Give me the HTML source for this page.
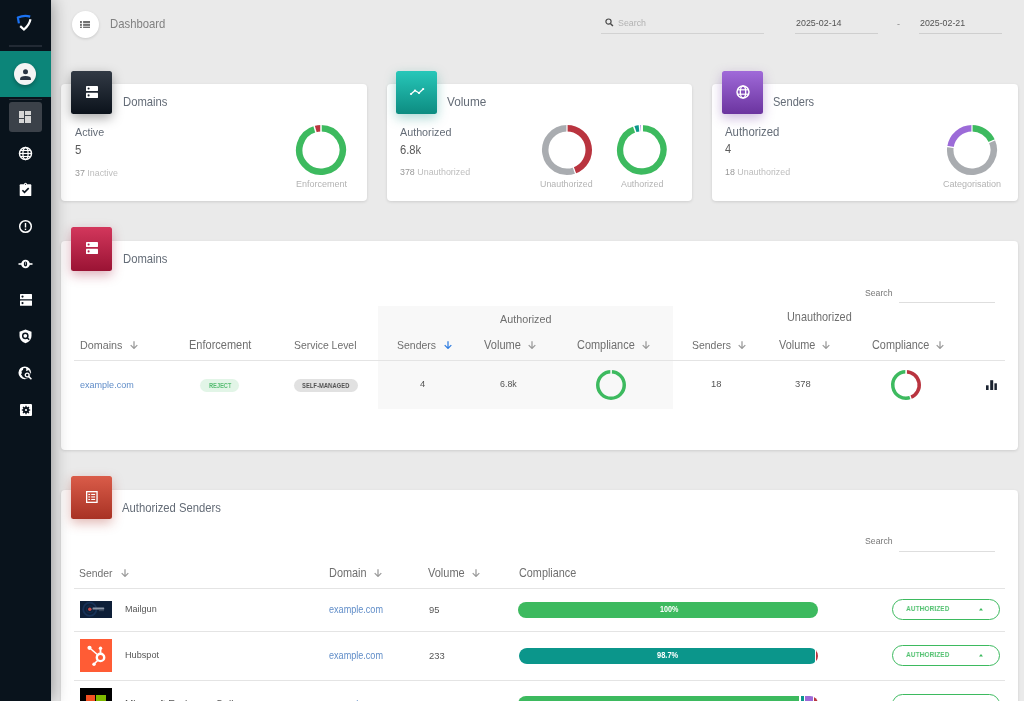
<!DOCTYPE html>
<html><head><meta charset="utf-8"><style>
html,body{margin:0;padding:0;}
body{width:1024px;height:701px;overflow:hidden;position:relative;background:#eaeaea;font-family:"Liberation Sans",sans-serif;}
.t{position:absolute;white-space:nowrap;line-height:1.117;will-change:transform;}
</style></head><body>
<div style="position:absolute;left:0px;top:0px;width:51px;height:701px;background:#09131c;box-shadow:0 0 18px rgba(0,0,0,0.42);z-index:2"></div>
<div style="position:absolute;left:0;top:0;width:51px;height:701px;z-index:3">
<svg style="position:absolute;left:0px;top:0px" width="51" height="45" viewBox="0 0 51 45"><path d="M18.9 23.4 L17.9 17.6 Q24 14.8 30.2 16.6" fill="none" stroke="#1b72f2" stroke-width="2.2" stroke-linecap="butt"/><path d="M20.2 26.2 L24 29.5 Q29.3 25 30.5 19.2" fill="none" stroke="#ffffff" stroke-width="2.2"/></svg>
<div style="position:absolute;left:9px;top:45px;width:33px;height:1.6000000000000014px;background:#222a34"></div>
<div style="position:absolute;left:0px;top:51px;width:51px;height:46px;background:#0c8579"></div>
<div style="position:absolute;left:14px;top:63px;width:22px;height:22px;background:#f4f4f4;border-radius:50%;box-shadow:0 2px 4px rgba(0,0,0,0.3)"></div>
<svg style="position:absolute;left:14px;top:63px" width="22" height="22" viewBox="0 0 22 22"><circle cx="11.5" cy="8.7" r="2.5" fill="#2a3342"/><path d="M6.1 16.9 L6.1 15.8 Q6.1 13 11.5 13 Q16.9 13 16.9 15.8 L16.9 16.9 Z" fill="#2a3342"/></svg>
<div style="position:absolute;left:9px;top:99px;width:33px;height:1px;background:#2a323b"></div>
<div style="position:absolute;left:9px;top:102px;width:33px;height:30px;background:#3b4149;border-radius:3px"></div>
<svg style="position:absolute;left:19px;top:111px" width="12" height="12" viewBox="0 0 12 12"><rect x="0" y="0" width="5" height="7" fill="#d6d6d6"/><rect x="0" y="8" width="5" height="4" fill="#d6d6d6"/><rect x="6" y="0" width="6" height="4" fill="#d6d6d6"/><rect x="6" y="5" width="6" height="7" fill="#d6d6d6"/></svg>
<svg style="position:absolute;left:18px;top:146.3px" width="15" height="15" viewBox="0 0 15 15"><circle cx="7.5" cy="7.5" r="6" fill="none" stroke="#ffffff" stroke-width="1.5"/><ellipse cx="7.5" cy="7.5" rx="2.6" ry="6" fill="none" stroke="#ffffff" stroke-width="1.3"/><line x1="1.5" y1="7.5" x2="13.5" y2="7.5" stroke="#ffffff" stroke-width="1.2"/><line x1="2.5" y1="4.5" x2="12.5" y2="4.5" stroke="#ffffff" stroke-width="1.1"/><line x1="2.5" y1="10.5" x2="12.5" y2="10.5" stroke="#ffffff" stroke-width="1.1"/></svg>
<svg style="position:absolute;left:19px;top:182px" width="13" height="15" viewBox="0 0 13 15"><rect x="0.7" y="2.3" width="11.6" height="11.8" rx="0.9" fill="#ffffff"/><circle cx="6.5" cy="2.2" r="1.5" fill="#ffffff"/><circle cx="6.5" cy="2.3" r="0.55" fill="#0b141e"/><path d="M3.4 8.2 L5.5 10.3 L9.7 6.1" fill="none" stroke="#0b141e" stroke-width="1.6"/></svg>
<svg style="position:absolute;left:18px;top:219.4px" width="15" height="15" viewBox="0 0 15 15"><circle cx="7.5" cy="7.5" r="5.8" fill="none" stroke="#ffffff" stroke-width="1.5"/><rect x="6.8" y="4" width="1.4" height="4.5" fill="#ffffff"/><rect x="6.8" y="9.6" width="1.4" height="1.4" fill="#ffffff"/></svg>
<svg style="position:absolute;left:17px;top:257px" width="17" height="14" viewBox="0 0 17 14"><line x1="1.5" y1="7" x2="15.5" y2="7" stroke="#ffffff" stroke-width="1.6"/><circle cx="8.5" cy="7" r="4.3" fill="#ffffff"/><rect x="6.9" y="4.4" width="3.2" height="5" rx="1.6" fill="#0b141e"/><rect x="8.2" y="5.2" width="0.6" height="2.6" fill="#ffffff"/></svg>
<svg style="position:absolute;left:19.7px;top:294px" width="12" height="12" viewBox="0 0 12 12"><rect x="0" y="0" width="12" height="5.2" rx="0.5" fill="#ffffff"/><rect x="0" y="6.5" width="12" height="5.2" rx="0.5" fill="#ffffff"/><circle cx="2.5" cy="2.6" r="1.1" fill="#0b141e"/><circle cx="2.5" cy="9.1" r="1.1" fill="#0b141e"/></svg>
<svg style="position:absolute;left:19px;top:329px" width="13" height="15.5" viewBox="0 0 13 15.5"><path d="M6.5 0.5 L12.5 2.8 V7 Q12.5 11.8 6.5 14.3 Q0.5 11.8 0.5 7 V2.8 Z" fill="#ffffff"/><circle cx="6.3" cy="6.8" r="2.6" fill="none" stroke="#0b141e" stroke-width="1.5"/><line x1="8.2" y1="8.7" x2="10.2" y2="10.7" stroke="#0b141e" stroke-width="1.5"/></svg>
<svg style="position:absolute;left:18px;top:366px" width="15" height="15" viewBox="0 0 15 15"><circle cx="6.8" cy="6.8" r="5.6" fill="none" stroke="#ffffff" stroke-width="1.5"/><path d="M1.5 5.5 Q2 2 5.5 1.3 Q5.5 4 3.5 5 Q4.5 7 3 8.5 Q5 10 4.8 12 Q1.5 10.5 1.5 5.5 Z" fill="#ffffff"/><path d="M7.5 1.3 Q9 3 8 5 L11.5 4 Q10.5 1.8 7.5 1.3 Z" fill="#ffffff"/><circle cx="9.4" cy="9.2" r="3.6" fill="#0b141e"/><circle cx="9.2" cy="9" r="1.9" fill="none" stroke="#ffffff" stroke-width="1.4"/><line x1="10.6" y1="10.4" x2="13.4" y2="13.2" stroke="#ffffff" stroke-width="1.5"/></svg>
<svg style="position:absolute;left:19.7px;top:403.8px" width="12" height="12" viewBox="0 0 12 12"><rect x="0" y="0" width="12" height="12" rx="1.1" fill="#ffffff"/><path d="M5.30 2.88 L5.39 1.74 L6.61 1.74 L6.70 2.88 L7.71 3.30 L8.58 2.56 L9.44 3.42 L8.70 4.29 L9.12 5.30 L10.26 5.39 L10.26 6.61 L9.12 6.70 L8.70 7.71 L9.44 8.58 L8.58 9.44 L7.71 8.70 L6.70 9.12 L6.61 10.26 L5.39 10.26 L5.30 9.12 L4.29 8.70 L3.42 9.44 L2.56 8.58 L3.30 7.71 L2.88 6.70 L1.74 6.61 L1.74 5.39 L2.88 5.30 L3.30 4.29 L2.56 3.42 L3.42 2.56 L4.29 3.30 Z" fill="#0b141e"/><circle cx="6" cy="6" r="1.1" fill="#ffffff"/></svg>
</div>
<div style="position:absolute;left:71.5px;top:10.8px;width:27.0px;height:26.999999999999996px;background:#fff;border-radius:50%;box-shadow:0 1px 3px rgba(0,0,0,0.14)"></div>
<svg style="position:absolute;left:80px;top:20.6px" width="10" height="7.8" viewBox="0 0 10 7.8"><rect x="0" y="0" width="1.9" height="2.1" fill="#707070"/><rect x="3.1" y="0" width="6.9" height="2.1" fill="#707070"/><rect x="0" y="2.8" width="1.9" height="2.1" fill="#707070"/><rect x="3.1" y="2.8" width="6.9" height="2.1" fill="#707070"/><rect x="0" y="5.6" width="1.9" height="2.1" fill="#707070"/><rect x="3.1" y="5.6" width="6.9" height="2.1" fill="#707070"/></svg>
<div class="t" style="left:109.80px;top:18.25px;font-size:11.33px;color:#818181;font-weight:400;transform:scale(1.0000,1.1);transform-origin:0 10.25px;">Dashboard</div>
<svg style="position:absolute;left:604px;top:17px" width="10" height="10" viewBox="0 0 10 10"><circle cx="4.5" cy="4.6" r="2.6" fill="none" stroke="#4a4a4a" stroke-width="1.2"/><line x1="6.4" y1="6.5" x2="8.9" y2="9" stroke="#4a4a4a" stroke-width="1.5"/></svg>
<div class="t" style="left:617.50px;top:18.80px;font-size:8.84px;color:#b2b2b2;font-weight:400;transform:scale(1.0000,1.1);transform-origin:0 8.00px;">Search</div>
<div style="position:absolute;left:601px;top:33px;width:163px;height:1px;background:#d2d2d2"></div>
<div class="t" style="left:795.60px;top:18.93px;font-size:8.92px;color:#535353;font-weight:400;transform:scale(1.0000,1.1);transform-origin:0 8.07px;">2025-02-14</div>
<div style="position:absolute;left:795px;top:33px;width:83px;height:1px;background:#cfcfcf"></div>
<div class="t" style="left:897.00px;top:18.86px;font-size:9.00px;color:#888;font-weight:400;transform:scale(1.0000,1.1);transform-origin:0 8.14px;">-</div>
<div class="t" style="left:919.80px;top:19.00px;font-size:8.84px;color:#535353;font-weight:400;transform:scale(1.0000,1.1);transform-origin:0 8.00px;">2025-02-21</div>
<div style="position:absolute;left:919px;top:33px;width:83px;height:1px;background:#cfcfcf"></div>
<div style="position:absolute;left:61px;top:84px;width:306px;height:117px;background:#fff;border-radius:4px;box-shadow:0 1px 3px rgba(0,0,0,0.12)"></div>
<div style="position:absolute;left:387px;top:84px;width:305px;height:117px;background:#fff;border-radius:4px;box-shadow:0 1px 3px rgba(0,0,0,0.12)"></div>
<div style="position:absolute;left:712px;top:84px;width:306px;height:117px;background:#fff;border-radius:4px;box-shadow:0 1px 3px rgba(0,0,0,0.12)"></div>
<div style="position:absolute;left:71px;top:71px;width:41px;height:43px;background:linear-gradient(180deg,#323a45,#0b121b);border-radius:2.5px;box-shadow:0 4px 12px rgba(0,0,0,0.35)"></div>
<svg style="position:absolute;left:85.8px;top:85.8px" width="12" height="12" viewBox="0 0 12 12"><rect x="0" y="0" width="12" height="5" rx="0.4" fill="#fff"/><rect x="0" y="6.8" width="12" height="5.2" rx="0.4" fill="#fff"/><circle cx="2.6" cy="2.5" r="1.05" fill="#1a222c"/><circle cx="2.6" cy="9.4" r="1.05" fill="#1a222c"/></svg>
<div class="t" style="left:122.80px;top:96.19px;font-size:11.28px;color:#646c77;font-weight:400;transform:scale(1.0000,1.1);transform-origin:0 10.21px;">Domains</div>
<div class="t" style="left:74.80px;top:126.50px;font-size:10.72px;color:#646c77;font-weight:400;transform:scale(1.0000,1.1);transform-origin:0 9.70px;">Active</div>
<div class="t" style="left:74.80px;top:143.79px;font-size:11.50px;color:#5b5b5b;font-weight:400;transform:scale(1.0000,1.1);transform-origin:0 10.41px;">5</div>
<div class="t" style="left:74.80px;top:168.65px;font-size:8.90px;color:#989898;font-weight:400;transform:scale(1.0000,1.1);transform-origin:0 8.05px;">37 <span style="color:#bdbdbd">Inactive</span></div>
<svg style="position:absolute;left:294.3px;top:122.69999999999999px" width="54" height="54"><path d="M27.000 5.250 A21.75 21.75 0 1 1 21.005 6.093" fill="none" stroke="#3dba5f" stroke-width="6.5"/><path d="M21.005 6.093 A21.75 21.75 0 0 1 27.000 5.250" fill="none" stroke="#b9343f" stroke-width="6.5"/><line x1="27.000" y1="9.500" x2="27.000" y2="1.000" stroke="#fff" stroke-width="1.5"/><line x1="22.176" y1="10.178" x2="19.833" y2="2.007" stroke="#fff" stroke-width="1.5"/></svg>
<div class="t" style="left:295.80px;top:178.86px;font-size:9.00px;color:#b3b3b3;font-weight:400;transform:scale(1.0000,1.1);transform-origin:0 8.14px;">Enforcement</div>
<div style="position:absolute;left:396px;top:71px;width:41px;height:43px;background:linear-gradient(180deg,#27c7b9,#0d8c81);border-radius:2.5px;box-shadow:0 4px 12px rgba(13,140,129,0.35)"></div>
<svg style="position:absolute;left:408px;top:86px" width="17" height="12" viewBox="0 0 17 12"><path d="M3 8 L7 4.5 L11 7 L15.2 3" fill="none" stroke="#fff" stroke-width="1.3"/><circle cx="3" cy="8" r="1.1" fill="#fff"/><circle cx="7" cy="4.5" r="1.1" fill="#fff"/><circle cx="11" cy="7" r="1.1" fill="#fff"/><circle cx="15.2" cy="3" r="1.1" fill="#fff"/></svg>
<div class="t" style="left:447.00px;top:95.34px;font-size:11.78px;color:#646c77;font-weight:400;transform:scale(1.0000,1.1);transform-origin:0 10.66px;">Volume</div>
<div class="t" style="left:399.80px;top:126.47px;font-size:10.75px;color:#646c77;font-weight:400;transform:scale(1.0000,1.1);transform-origin:0 9.73px;">Authorized</div>
<div class="t" style="left:399.80px;top:144.05px;font-size:11.22px;color:#5b5b5b;font-weight:400;transform:scale(1.0000,1.1);transform-origin:0 10.15px;">6.8k</div>
<div class="t" style="left:399.80px;top:168.35px;font-size:8.90px;color:#989898;font-weight:400;transform:scale(1.0000,1.1);transform-origin:0 8.05px;">378 <span style="color:#bdbdbd">Unauthorized</span></div>
<svg style="position:absolute;left:540px;top:122.69999999999999px" width="54" height="54"><path d="M27.000 5.250 A21.75 21.75 0 0 1 34.439 47.438" fill="none" stroke="#b9343f" stroke-width="6.5"/><path d="M34.439 47.438 A21.75 21.75 0 1 1 27.000 5.250" fill="none" stroke="#a9acb0" stroke-width="6.5"/><line x1="27.000" y1="9.500" x2="27.000" y2="1.000" stroke="#fff" stroke-width="1.2"/><line x1="32.985" y1="43.445" x2="35.893" y2="51.432" stroke="#fff" stroke-width="1.2"/></svg>
<div class="t" style="left:540.30px;top:179.68px;font-size:8.86px;color:#b3b3b3;font-weight:400;transform:scale(1.0000,1.1);transform-origin:0 8.02px;">Unauthorized</div>
<svg style="position:absolute;left:615.1px;top:122.89999999999999px" width="53.6" height="53.6"><path d="M26.800 5.150 A21.650000000000002 21.650000000000002 0 1 1 19.751 6.330" fill="none" stroke="#3dba5f" stroke-width="6.3"/><path d="M19.751 6.330 A21.650000000000002 21.650000000000002 0 0 1 24.725 5.250" fill="none" stroke="#0b968b" stroke-width="6.3"/><path d="M24.725 5.250 A21.650000000000002 21.650000000000002 0 0 1 26.800 5.150" fill="none" stroke="#9c6bd8" stroke-width="6.3"/><line x1="21.103" y1="10.253" x2="18.400" y2="2.406" stroke="#fff" stroke-width="1.5"/><line x1="25.123" y1="9.381" x2="24.327" y2="1.119" stroke="#fff" stroke-width="1.5"/><line x1="26.892" y1="9.300" x2="26.935" y2="1.000" stroke="#fff" stroke-width="2.2"/></svg>
<div class="t" style="left:620.50px;top:179.67px;font-size:8.87px;color:#b3b3b3;font-weight:400;transform:scale(1.0000,1.1);transform-origin:0 8.03px;">Authorized</div>
<div style="position:absolute;left:722px;top:71px;width:41px;height:43px;background:linear-gradient(180deg,#a06ad9,#6b349f);border-radius:2.5px;box-shadow:0 4px 12px rgba(107,52,159,0.35)"></div>
<svg style="position:absolute;left:735.5px;top:84.5px" width="14" height="14" viewBox="0 0 14 14"><circle cx="7" cy="7" r="6" fill="none" stroke="#fff" stroke-width="1.5"/><ellipse cx="7" cy="7" rx="2.7" ry="6" fill="none" stroke="#fff" stroke-width="1.3"/><line x1="1.2" y1="4.8" x2="12.8" y2="4.8" stroke="#fff" stroke-width="1.2"/><line x1="1.2" y1="9.2" x2="12.8" y2="9.2" stroke="#fff" stroke-width="1.2"/></svg>
<div class="t" style="left:772.80px;top:95.89px;font-size:11.06px;color:#646c77;font-weight:400;transform:scale(1.0000,1.1);transform-origin:0 10.01px;">Senders</div>
<div class="t" style="left:725.00px;top:126.38px;font-size:11.40px;color:#646c77;font-weight:400;transform:scale(1.0000,1.1);transform-origin:0 10.32px;">Authorized</div>
<div class="t" style="left:725.00px;top:142.74px;font-size:11.00px;color:#5b5b5b;font-weight:400;transform:scale(1.0000,1.1);transform-origin:0 9.96px;">4</div>
<div class="t" style="left:725.00px;top:167.65px;font-size:8.90px;color:#989898;font-weight:400;transform:scale(1.0000,1.1);transform-origin:0 8.05px;">18 <span style="color:#bdbdbd">Unauthorized</span></div>
<svg style="position:absolute;left:944.9px;top:122.80000000000001px" width="54" height="54"><path d="M27.000 5.250 A21.75 21.75 0 0 1 46.870 18.153" fill="none" stroke="#3dba5f" stroke-width="6.5"/><path d="M46.870 18.153 A21.75 21.75 0 1 1 5.462 23.973" fill="none" stroke="#a9acb0" stroke-width="6.5"/><path d="M5.462 23.973 A21.75 21.75 0 0 1 27.000 5.250" fill="none" stroke="#9c6bd8" stroke-width="6.5"/><line x1="27.000" y1="9.500" x2="27.000" y2="1.000" stroke="#fff" stroke-width="1.2"/><line x1="42.987" y1="19.882" x2="50.752" y2="16.425" stroke="#fff" stroke-width="1.2"/><line x1="9.670" y1="24.564" x2="1.253" y2="23.381" stroke="#fff" stroke-width="1.2"/></svg>
<div class="t" style="left:942.80px;top:178.73px;font-size:9.03px;color:#b3b3b3;font-weight:400;transform:scale(1.0000,1.1);transform-origin:0 8.17px;">Categorisation</div>
<div style="position:absolute;left:61px;top:241px;width:957px;height:209px;background:#fff;border-radius:4px;box-shadow:0 1px 3px rgba(0,0,0,0.12)"></div>
<div style="position:absolute;left:71px;top:227px;width:41px;height:44px;background:linear-gradient(180deg,#d3375c,#9a1334);border-radius:2.5px;box-shadow:0 4px 12px rgba(154,19,52,0.35)"></div>
<svg style="position:absolute;left:85.8px;top:242.2px" width="12" height="12" viewBox="0 0 12 12"><rect x="0" y="0" width="12" height="5" rx="0.4" fill="#fff"/><rect x="0" y="6.8" width="12" height="5.2" rx="0.4" fill="#fff"/><circle cx="2.6" cy="2.5" r="1.05" fill="#b0224a"/><circle cx="2.6" cy="9.4" r="1.05" fill="#b0224a"/></svg>
<div class="t" style="left:122.50px;top:252.99px;font-size:11.28px;color:#646c77;font-weight:400;transform:scale(1.0000,1.1);transform-origin:0 10.21px;">Domains</div>
<div class="t" style="left:865.00px;top:288.84px;font-size:8.68px;color:#777;font-weight:400;transform:scale(1.0000,1.1);transform-origin:0 7.86px;">Search</div>
<div style="position:absolute;left:899px;top:302px;width:96px;height:1px;background:#dedede"></div>
<div style="position:absolute;left:378px;top:306px;width:295px;height:103px;background:#f8f8f8"></div>
<div class="t" style="left:499.70px;top:313.35px;font-size:10.77px;color:#6f6f6f;font-weight:400;transform:scale(1.0000,1.1);transform-origin:0 9.75px;">Authorized</div>
<div class="t" style="left:787.20px;top:311.34px;font-size:10.89px;color:#6f6f6f;font-weight:400;transform:scale(1.0000,1.1);transform-origin:0 9.86px;">Unauthorized</div>
<div class="t" style="left:79.80px;top:339.47px;font-size:10.75px;color:#6f6f6f;font-weight:400;transform:scale(1.0000,1.1);transform-origin:0 9.73px;">Domains</div>
<svg style="position:absolute;left:129.6px;top:341px" width="8" height="8" viewBox="0 0 8 8"><path d="M4 0.3 V7.4 M0.7 4.1 L4 7.4 L7.3 4.1" fill="none" stroke="#9a9a9a" stroke-width="1.25"/></svg>
<div class="t" style="left:188.60px;top:339.24px;font-size:11.01px;color:#6f6f6f;font-weight:400;transform:scale(1.0000,1.1);transform-origin:0 9.96px;">Enforcement</div>
<div class="t" style="left:293.90px;top:339.78px;font-size:10.41px;color:#6f6f6f;font-weight:400;transform:scale(1.0000,1.1);transform-origin:0 9.42px;">Service Level</div>
<div class="t" style="left:397.20px;top:339.72px;font-size:10.47px;color:#6f6f6f;font-weight:400;transform:scale(1.0000,1.1);transform-origin:0 9.48px;">Senders</div>
<svg style="position:absolute;left:443.6px;top:341px" width="8" height="8" viewBox="0 0 8 8"><path d="M4 0.3 V7.4 M0.7 4.1 L4 7.4 L7.3 4.1" fill="none" stroke="#2f7de1" stroke-width="1.25"/></svg>
<div class="t" style="left:484.00px;top:339.16px;font-size:11.09px;color:#6f6f6f;font-weight:400;transform:scale(1.0000,1.1);transform-origin:0 10.04px;">Volume</div>
<svg style="position:absolute;left:527.8px;top:341px" width="8" height="8" viewBox="0 0 8 8"><path d="M4 0.3 V7.4 M0.7 4.1 L4 7.4 L7.3 4.1" fill="none" stroke="#9a9a9a" stroke-width="1.25"/></svg>
<div class="t" style="left:576.90px;top:339.29px;font-size:10.95px;color:#6f6f6f;font-weight:400;transform:scale(1.0000,1.1);transform-origin:0 9.91px;">Compliance</div>
<svg style="position:absolute;left:641.5px;top:341px" width="8" height="8" viewBox="0 0 8 8"><path d="M4 0.3 V7.4 M0.7 4.1 L4 7.4 L7.3 4.1" fill="none" stroke="#9a9a9a" stroke-width="1.25"/></svg>
<div class="t" style="left:691.60px;top:339.75px;font-size:10.44px;color:#6f6f6f;font-weight:400;transform:scale(1.0000,1.1);transform-origin:0 9.45px;">Senders</div>
<svg style="position:absolute;left:737.8px;top:341px" width="8" height="8" viewBox="0 0 8 8"><path d="M4 0.3 V7.4 M0.7 4.1 L4 7.4 L7.3 4.1" fill="none" stroke="#9a9a9a" stroke-width="1.25"/></svg>
<div class="t" style="left:778.60px;top:339.32px;font-size:10.91px;color:#6f6f6f;font-weight:400;transform:scale(1.0000,1.1);transform-origin:0 9.88px;">Volume</div>
<svg style="position:absolute;left:822.4px;top:341px" width="8" height="8" viewBox="0 0 8 8"><path d="M4 0.3 V7.4 M0.7 4.1 L4 7.4 L7.3 4.1" fill="none" stroke="#9a9a9a" stroke-width="1.25"/></svg>
<div class="t" style="left:871.60px;top:339.36px;font-size:10.87px;color:#6f6f6f;font-weight:400;transform:scale(1.0000,1.1);transform-origin:0 9.84px;">Compliance</div>
<svg style="position:absolute;left:936px;top:341px" width="8" height="8" viewBox="0 0 8 8"><path d="M4 0.3 V7.4 M0.7 4.1 L4 7.4 L7.3 4.1" fill="none" stroke="#9a9a9a" stroke-width="1.25"/></svg>
<div style="position:absolute;left:74px;top:360px;width:931px;height:1px;background:#e4e4e4"></div>
<div class="t" style="left:79.50px;top:380.02px;font-size:9.04px;color:#608dc8;font-weight:400;transform:scale(1.0000,1.1);transform-origin:0 8.18px;">example.com</div>
<div style="position:absolute;left:200px;top:379px;width:39px;height:13px;background:#e2f5e7;border-radius:7px"></div>
<div class="t" style="left:208.80px;top:381.80px;font-size:7.40px;color:#56bc72;font-weight:700;transform:scale(0.7638,1.0);transform-origin:0 6.70px;">REJECT</div>
<div style="position:absolute;left:293.5px;top:379px;width:64.0px;height:13px;background:#e1e1e1;border-radius:7px"></div>
<div class="t" style="left:301.60px;top:381.80px;font-size:7.40px;color:#525252;font-weight:700;transform:scale(0.7952,1.0);transform-origin:0 6.70px;">SELF-MANAGED</div>
<div class="t" style="left:419.80px;top:379.49px;font-size:9.40px;color:#555;font-weight:400;">4</div>
<div class="t" style="left:499.60px;top:379.96px;font-size:8.89px;color:#555;font-weight:400;">6.8k</div>
<svg style="position:absolute;left:594.3px;top:368px" width="34" height="34"><circle cx="17" cy="17" r="13.25" fill="none" stroke="#3dba5f" stroke-width="3.5"/><line x1="17.092" y1="6.500" x2="17.140" y2="1.001" stroke="#f8f8f8" stroke-width="1.6"/></svg>
<div class="t" style="left:710.90px;top:379.49px;font-size:9.40px;color:#555;font-weight:400;">18</div>
<div class="t" style="left:794.60px;top:379.49px;font-size:9.40px;color:#555;font-weight:400;">378</div>
<svg style="position:absolute;left:888.5px;top:367.6px" width="34" height="34"><path d="M17.000 3.750 A13.25 13.25 0 0 1 21.532 29.451" fill="none" stroke="#b9343f" stroke-width="3.5"/><path d="M21.532 29.451 A13.25 13.25 0 1 1 17.000 3.750" fill="none" stroke="#3dba5f" stroke-width="3.5"/><line x1="17.092" y1="6.500" x2="17.140" y2="1.001" stroke="#fff" stroke-width="1.6"/><line x1="20.591" y1="26.867" x2="22.472" y2="32.035" stroke="#fff" stroke-width="1.3"/></svg>
<svg style="position:absolute;left:986px;top:379.5px" width="11" height="10.5" viewBox="0 0 11 10.5"><rect x="0" y="5.3" width="2.6" height="5.2" fill="#1b2330"/><rect x="4.2" y="0.2" width="3" height="10.3" fill="#1b2330"/><rect x="8.4" y="3.3" width="2.5" height="7.2" fill="#1b2330"/></svg>
<div style="position:absolute;left:61px;top:490px;width:957px;height:270px;background:#fff;border-radius:4px;box-shadow:0 1px 3px rgba(0,0,0,0.12)"></div>
<div style="position:absolute;left:71px;top:476px;width:41px;height:43px;background:linear-gradient(180deg,#da5c49,#a83224);border-radius:2.5px;box-shadow:0 4px 12px rgba(168,50,36,0.35)"></div>
<svg style="position:absolute;left:85.8px;top:490.9px" width="12" height="12" viewBox="0 0 12 12"><rect x="0.65" y="0.65" width="10.4" height="10.7" fill="none" stroke="#fff" stroke-width="1.3"/><rect x="2.3" y="2.9" width="1.8" height="1.1" fill="#fff"/><rect x="5.2" y="2.9" width="3.9" height="1.1" fill="#fff"/><rect x="2.3" y="5.4" width="1.8" height="1.1" fill="#fff"/><rect x="5.2" y="5.4" width="3.9" height="1.1" fill="#fff"/><rect x="2.3" y="7.9" width="1.8" height="1.1" fill="#fff"/><rect x="5.2" y="7.9" width="3.9" height="1.1" fill="#fff"/></svg>
<div class="t" style="left:122.40px;top:502.20px;font-size:11.27px;color:#646c77;font-weight:400;transform:scale(1.0000,1.1);transform-origin:0 10.20px;">Authorized Senders</div>
<div class="t" style="left:864.60px;top:537.42px;font-size:8.71px;color:#777;font-weight:400;transform:scale(1.0000,1.1);transform-origin:0 7.88px;">Search</div>
<div style="position:absolute;left:899px;top:551px;width:96px;height:1px;background:#dedede"></div>
<div class="t" style="left:79.30px;top:567.70px;font-size:10.39px;color:#6f6f6f;font-weight:400;transform:scale(1.0000,1.1);transform-origin:0 9.40px;">Sender</div>
<svg style="position:absolute;left:120.5px;top:569px" width="8" height="8" viewBox="0 0 8 8"><path d="M4 0.3 V7.4 M0.7 4.1 L4 7.4 L7.3 4.1" fill="none" stroke="#9a9a9a" stroke-width="1.25"/></svg>
<div class="t" style="left:329.40px;top:567.22px;font-size:10.91px;color:#6f6f6f;font-weight:400;transform:scale(1.0000,1.1);transform-origin:0 9.88px;">Domain</div>
<svg style="position:absolute;left:373.8px;top:569px" width="8" height="8" viewBox="0 0 8 8"><path d="M4 0.3 V7.4 M0.7 4.1 L4 7.4 L7.3 4.1" fill="none" stroke="#9a9a9a" stroke-width="1.25"/></svg>
<div class="t" style="left:428.40px;top:567.11px;font-size:11.03px;color:#6f6f6f;font-weight:400;transform:scale(1.0000,1.1);transform-origin:0 9.99px;">Volume</div>
<svg style="position:absolute;left:472px;top:569px" width="8" height="8" viewBox="0 0 8 8"><path d="M4 0.3 V7.4 M0.7 4.1 L4 7.4 L7.3 4.1" fill="none" stroke="#9a9a9a" stroke-width="1.25"/></svg>
<div class="t" style="left:518.50px;top:567.28px;font-size:10.85px;color:#6f6f6f;font-weight:400;transform:scale(1.0000,1.1);transform-origin:0 9.82px;">Compliance</div>
<div style="position:absolute;left:74px;top:588px;width:931px;height:1px;background:#e4e4e4"></div>
<div style="position:absolute;left:74px;top:631px;width:931px;height:1px;background:#e4e4e4"></div>
<div style="position:absolute;left:74px;top:680px;width:931px;height:1px;background:#e4e4e4"></div>
<div style="position:absolute;left:79.5px;top:601px;width:32.5px;height:16.799999999999955px;background:#0e1f38"></div>
<svg style="position:absolute;left:79.5px;top:601px" width="32.5" height="16.8" viewBox="0 0 32.5 16.8"><circle cx="9.8" cy="8.3" r="6.6" fill="none" stroke="#173157" stroke-width="1.8"/><circle cx="9.8" cy="8.3" r="3.4" fill="none" stroke="#112848" stroke-width="1.2"/><circle cx="9.8" cy="8.3" r="1.7" fill="#c84a48"/><rect x="12.6" y="6.6" width="11.6" height="1.9" rx="0.5" fill="#8a95a5"/><rect x="19" y="9.4" width="5" height="0.7" fill="#4d5a6c"/></svg>
<div class="t" style="left:124.70px;top:604.01px;font-size:9.05px;color:#555;font-weight:400;transform:scale(1.0000,1.05);transform-origin:0 8.19px;">Mailgun</div>
<div class="t" style="left:329.40px;top:605.38px;font-size:9.08px;color:#608dc8;font-weight:400;transform:scale(1.0000,1.1);transform-origin:0 8.22px;">example.com</div>
<div class="t" style="left:428.80px;top:604.59px;font-size:9.40px;color:#555;font-weight:400;">95</div>
<div style="position:absolute;left:518px;top:601.5px;width:300px;height:16.200000000000045px;background:#3dba5f;border-radius:8px"></div>
<div class="t" style="left:659.60px;top:606.09px;font-size:7.19px;color:#fff;font-weight:700;transform:scale(1.0000,1.15);transform-origin:0 6.51px;">100%</div>
<div style="position:absolute;left:892px;top:599px;width:108px;height:21px;border:1px solid #3dba5f;border-radius:10.5px;box-sizing:border-box"></div>
<div class="t" style="left:905.80px;top:605.06px;font-size:8.00px;color:#54c272;font-weight:700;transform:scale(0.8276,1.0);transform-origin:0 7.24px;">AUTHORIZED</div>
<svg style="position:absolute;left:979px;top:608.3px" width="4" height="2.4" viewBox="0 0 4 2.4"><path d="M0 2.4 L2 0 L4 2.4 Z" fill="#3dba5f"/></svg>
<div style="position:absolute;left:79.5px;top:639px;width:32.5px;height:33px;background:#ff5c35"></div>
<svg style="position:absolute;left:79.5px;top:639px" width="32.5" height="33" viewBox="0 0 32.5 33"><circle cx="20.5" cy="18.4" r="3.7" fill="none" stroke="#fff" stroke-width="2.4"/><line x1="20.5" y1="14.5" x2="20.5" y2="9.5" stroke="#fff" stroke-width="1.8"/><circle cx="20.5" cy="9.2" r="1.7" fill="#fff"/><line x1="17.6" y1="15.8" x2="10.6" y2="9.7" stroke="#fff" stroke-width="1.5"/><circle cx="9.5" cy="8.8" r="2.1" fill="#fff"/><line x1="17.8" y1="21.2" x2="14.4" y2="24.8" stroke="#fff" stroke-width="1.6"/><circle cx="14" cy="25.2" r="1.7" fill="#fff"/></svg>
<div class="t" style="left:124.80px;top:650.06px;font-size:9.10px;color:#555;font-weight:400;letter-spacing:0.018px;">Hubspot</div>
<div class="t" style="left:329.40px;top:650.78px;font-size:9.08px;color:#608dc8;font-weight:400;transform:scale(1.0000,1.1);transform-origin:0 8.22px;">example.com</div>
<div class="t" style="left:428.80px;top:650.59px;font-size:9.40px;color:#555;font-weight:400;">233</div>
<div style="position:absolute;left:519px;top:647.5px;width:299px;height:16.3px;border-radius:8px;overflow:hidden;background:#fff"><div style="position:absolute;left:0;top:0;width:295.5px;height:100%;background:#0b968b;border-radius:6px 3px 3px 6px"></div><div style="position:absolute;left:296.5px;top:0;width:10px;height:100%;background:#b9343f"></div></div>
<div class="t" style="left:656.80px;top:651.83px;font-size:7.48px;color:#fff;font-weight:700;transform:scale(1.0000,1.15);transform-origin:0 6.77px;">98.7%</div>
<div style="position:absolute;left:892px;top:645px;width:108px;height:21px;border:1px solid #3dba5f;border-radius:10.5px;box-sizing:border-box"></div>
<div class="t" style="left:905.80px;top:651.06px;font-size:8.00px;color:#54c272;font-weight:700;transform:scale(0.8276,1.0);transform-origin:0 7.24px;">AUTHORIZED</div>
<svg style="position:absolute;left:979px;top:654.3px" width="4" height="2.4" viewBox="0 0 4 2.4"><path d="M0 2.4 L2 0 L4 2.4 Z" fill="#3dba5f"/></svg>
<div style="position:absolute;left:79.5px;top:688px;width:32.3px;height:32px;background:#000"></div>
<div style="position:absolute;left:86.2px;top:695px;width:8.599999999999994px;height:9px;background:#f25022"></div>
<div style="position:absolute;left:96px;top:695px;width:9.5px;height:9px;background:#7fba00"></div>
<div class="t" style="left:124.50px;top:699.15px;font-size:10.00px;color:#555;font-weight:400;transform:scale(1.0000,1.1);transform-origin:0 9.05px;">Microsoft Exchange Online</div>
<div class="t" style="left:329.40px;top:700.38px;font-size:9.08px;color:#608dc8;font-weight:400;transform:scale(1.0000,1.1);transform-origin:0 8.22px;">example.com</div>
<div class="t" style="left:428.50px;top:701.06px;font-size:9.00px;color:#555;font-weight:400;">2,158</div>
<div style="position:absolute;left:518px;top:696.4px;width:300px;height:16.3px;border-radius:8px;overflow:hidden;background:#fff"><div style="position:absolute;left:0;top:0;width:281.3px;height:100%;background:#3dba5f"></div><div style="position:absolute;left:282.5px;top:0;width:3.3px;height:100%;background:#0b968b"></div><div style="position:absolute;left:287px;top:0;width:8px;height:100%;background:#9c6bd8"></div><div style="position:absolute;left:296.4px;top:0;width:10px;height:100%;background:#b9343f"></div></div>
<div style="position:absolute;left:892px;top:694px;width:108px;height:21px;border:1px solid #3dba5f;border-radius:10.5px;box-sizing:border-box"></div>
<div class="t" style="left:905.80px;top:700.06px;font-size:8.00px;color:#54c272;font-weight:700;transform:scale(0.8276,1.0);transform-origin:0 7.24px;">AUTHORIZED</div>
<svg style="position:absolute;left:979px;top:703.3px" width="4" height="2.4" viewBox="0 0 4 2.4"><path d="M0 2.4 L2 0 L4 2.4 Z" fill="#3dba5f"/></svg>
</body></html>
